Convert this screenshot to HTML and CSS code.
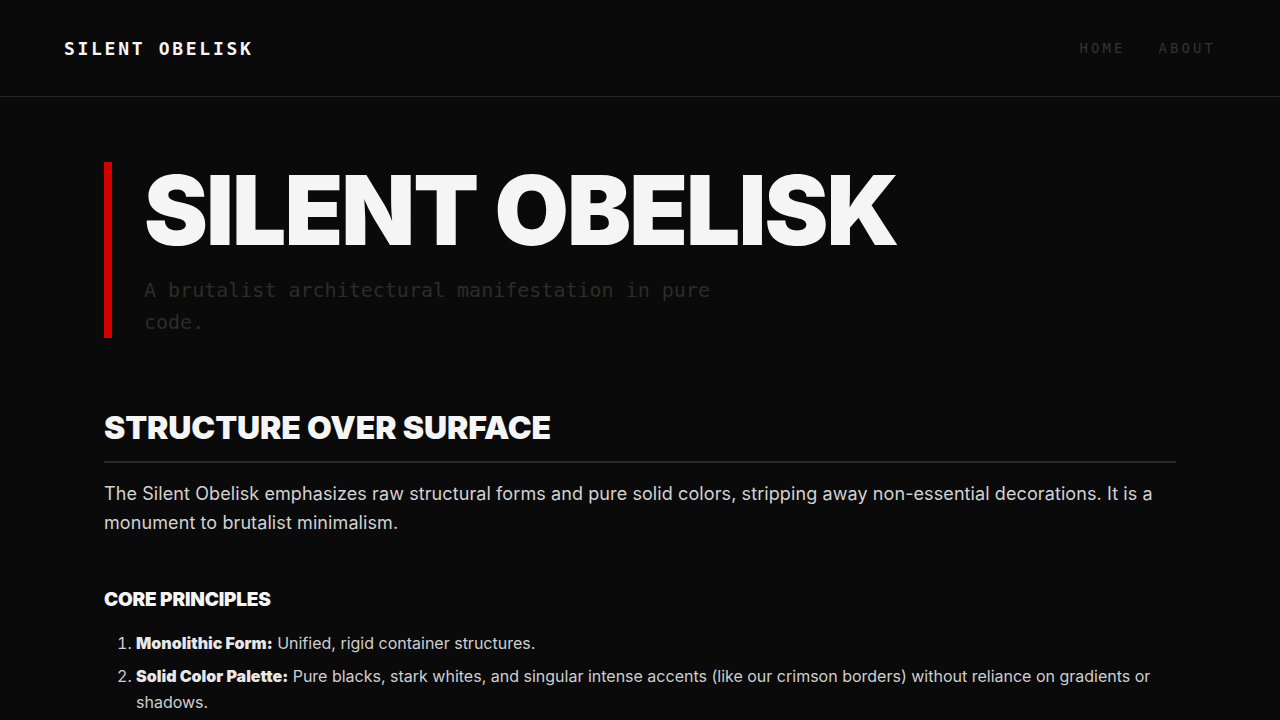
FILE: index.html
```html
<!DOCTYPE html>
<html lang="en">
<head>
<meta charset="utf-8">
<title>Silent Obelisk</title>
<link rel="stylesheet" href="styles.css">
</head>
<body>
<header class="site-header">
  <div class="logo">SILENT OBELISK</div>
  <nav class="nav">
    <a href="#">HOME</a>
    <a href="#">ABOUT</a>
  </nav>
</header>
<main class="content">
  <section class="hero">
    <h1 class="hero-title">SILENT OBELISK</h1>
    <p class="hero-sub">A brutalist architectural manifestation in pure code.</p>
  </section>
  <section class="section">
    <h2 class="section-title">STRUCTURE OVER SURFACE</h2>
    <p class="lead">The Silent Obelisk emphasizes raw structural forms and pure solid colors, stripping away non-essential decorations. It is a monument to brutalist minimalism.</p>
    <h3 class="sub-title">CORE PRINCIPLES</h3>
    <ol class="principles">
      <li><strong>Monolithic Form:</strong> Unified, rigid container structures.</li>
      <li><strong>Solid Color Palette:</strong> Pure blacks, stark whites, and singular intense accents (like our crimson borders) without reliance on gradients or shadows.</li>
      <li><strong>Typographic Weight:</strong> Heavy, uncompromising headings set against quiet monospace annotations.</li>
    </ol>
  </section>
</main>
</body>
</html>
```

FILE: styles.css
```css
* { box-sizing: border-box; }
html, body { margin: 0; padding: 0; }
body {
  background: #0a0a0a;
  color: #f5f5f5;
  font-family: Inter, "Noto Sans", sans-serif;
}
.site-header {
  height: 97px;
  display: flex;
  align-items: center;
  justify-content: space-between;
  padding: 0 64px 0 64px;
  border-bottom: 1px solid #262626;
}
.logo {
  font-family: "DejaVu Sans Mono", "Liberation Mono", monospace;
  font-weight: 700;
  font-size: 18px;
  letter-spacing: 0.15em;
  color: #f5f5f5;
}
.nav {
  display: flex;
  gap: 33px;
}
.nav a {
  font-family: "DejaVu Sans Mono", "Liberation Mono", monospace;
  font-size: 14px;
  letter-spacing: 0.22em;
  color: #333;
  text-decoration: none;
}
.content {
  padding: 65px 104px 40px;
}
.hero {
  border-left: 8px solid #d40000;
  padding-left: 32px;
}
.hero-title {
  margin: 0;
  font-size: 96px;
  line-height: 1;
  font-weight: 900;
  letter-spacing: -0.02em;
  color: #f5f5f5;
}
.hero-sub {
  margin: 16px 0 0;
  max-width: 600px;
  font-family: "DejaVu Sans Mono", "Liberation Mono", monospace;
  font-size: 20px;
  line-height: 32px;
  color: #2c2c2c;
}
.section {
  margin-top: 68px;
}
.section-title {
  margin: 0;
  padding-bottom: 11px;
  border-bottom: 2px solid #2a2a2a;
  font-size: 32px;
  line-height: 44px;
  font-weight: 900;
  letter-spacing: -0.1px;
  color: #f5f5f5;
}
.lead {
  margin: 16px 0 0;
  font-size: 18px;
  line-height: 29px;
  letter-spacing: 0.095px;
  color: #d2d2d2;
}
.sub-title {
  margin: 49px 0 0;
  font-size: 19px;
  line-height: 28px;
  font-weight: 900;
  letter-spacing: -0.01em;
  color: #f5f5f5;
}
.principles {
  margin: 16px 0 0;
  padding-left: 32px;
  font-size: 16px;
  line-height: 26px;
  color: #cfcfcf;
}
.principles li { margin-bottom: 7px; }
.principles strong {
  font-weight: 900;
  color: #e8e8e8;
}
```
